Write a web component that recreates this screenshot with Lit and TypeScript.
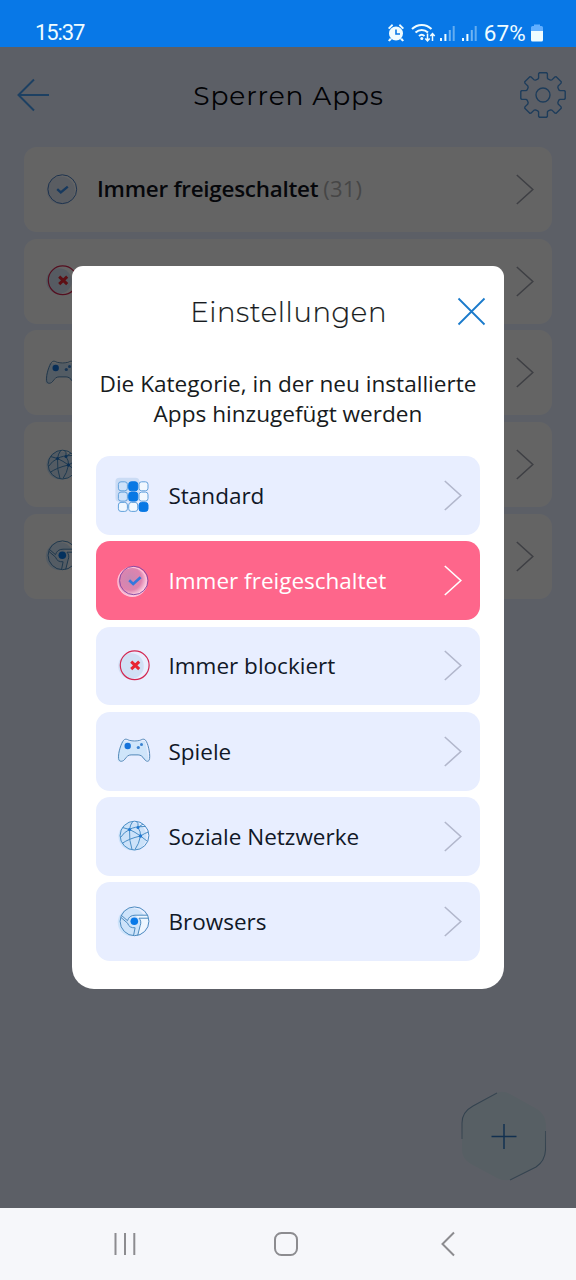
import { LitElement, html, svg, css } from "lit";
import { customElement, property } from "lit/decorators.js";

type IconName = "grid" | "check" | "checkActive" | "block" | "game" | "globe" | "browser";

const gearPath = (): string => {
  const tooth = [[-5.2, -15.8], [-4.4, -17], [-4.4, -21.2], [-3.6, -22.2], [3.6, -22.2], [4.4, -21.2], [4.4, -17], [5.2, -15.8]];
  const points: string[] = [];
  for (let i = 0; i < 8; i++) {
    const a = (i * Math.PI) / 4;
    for (const [x, y] of tooth) {
      points.push(`${(x * Math.cos(a) - y * Math.sin(a)).toFixed(2)} ${(x * Math.sin(a) + y * Math.cos(a)).toFixed(2)}`);
    }
  }
  return `M${points.join("L")}Z`;
};

const gridCells = [0, 1, 2].flatMap((r) => [0, 1, 2].map((c) => ({ r, c, on: (c === 1 && r < 2) || (c === 2 && r === 2) })));

const icons: Record<IconName, unknown> = {
  grid: svg`
    <rect x="0.4" y="0.8" width="24" height="24" rx="4" fill="#cbdcf5"/>
    ${gridCells.map(({ r, c, on }) => svg`<rect x=${3.4 + c * 10.3} y=${4.8 + r * 10.3} width="9" height="9" rx="2.6"
      fill=${on ? "#0878e4" : c === 0 && r < 2 ? "#cfe2fa" : "#f1f8ff"} stroke=${on ? "#0878e4" : "#63a2dc"} stroke-width="1"/>`)}`,
  check: svg`
    <circle cx="17.8" cy="18.4" r="14" fill="#cfdcf2" opacity=".6"/>
    <circle cx="19.3" cy="17.2" r="14.4" fill="none" stroke="#4a7fc4" stroke-width="1"/>
    <path d="M14.2 17.2l3.6 3.2 7-5.8" fill="none" stroke="#3a8eea" stroke-width="2.4"/>`,
  checkActive: svg`
    <defs><radialGradient id="glow" cx=".42" cy=".4" r=".6"><stop offset="0" stop-color="#c888b4"/><stop offset=".65" stop-color="#df84ae"/><stop offset="1" stop-color="#ffd5e6"/></radialGradient></defs>
    <circle cx="17.4" cy="18.8" r="14.5" fill="url(#glow)" stroke="#ffc4da" stroke-width="1.2"/>
    <circle cx="18.8" cy="17.5" r="14.2" fill="none" stroke="#8a4da5" stroke-width="1"/>
    <path d="M14.2 17.3l4 3.7 7.4-6.7" fill="none" stroke="#3478dd" stroke-width="2.6"/>`,
  block: svg`
    <circle cx="16" cy="18" r="12.8" fill="#c9dbf2" opacity=".75"/>
    <circle cx="19.7" cy="17.3" r="14.4" fill="none" stroke="#d32650" stroke-width="1.2"/>
    <path d="M16.2 13.6l8 7.6m0-7.600l-8 7.600" fill="none" stroke="#e82632" stroke-width="3"/>`,
  game: svg`
    <path d="M7 8C5 13 2 22 2.800 28c3 3 7-3 10-6h12c3 3 6 7 9 5L30 8c-7 1-16 1-23 0z" fill="#cfe5fa"/>
    <path d="M8.600 6.800c2.200-2.300 4.100-.4 5.900.1 3.200.8 7 .8 10.200 0 1.800-.5 3.700-2.400 5.900-.1 2.200 2.600 4.700 12.400 4 18.200-.5 4-3.500 3.200-5.300.6-1.800-2.700-3.500-4.200-6.200-4.200h-7c-2.700 0-4.400 1.500-6.200 4.200-1.800 2.600-5.800 3.400-6.300-.6-.7-5.800 2.800-15.600 5-18.200z" transform="translate(0 .5)" fill="none" stroke="#5288b8" stroke-width="1"/>
    <circle cx="12.700" cy="13" r="3.200" fill="#1673da"/><circle cx="23.300" cy="14.500" r="1.600" fill="#3a82d0"/><circle cx="26.500" cy="11.500" r="1.500" fill="#3a82d0"/>`,
  globe: svg`
    <circle cx="17.500" cy="18.500" r="14" fill="#c4dff8" opacity=".8"/>
    <g fill="none" stroke="#4a8ec6" stroke-width="1"><circle cx="19.500" cy="17.600" r="14.400"/>
    <path d="M7.500 9.500L14.500 11.500Q19 8.500 30 8.500M18 3Q15 7 14.500 11.500Q14 23 17 31.500M21 3Q24 5 23 9.500Q26 14 25.500 18Q24 26 20 31.500M14.500 11.500Q9 14 5.500 19.500M14.500 11.500Q20 14 25.500 18L32 23M7 25.500Q14 20.500 25.500 18Q30 15 33.500 14M23 9.500L28 6"/></g>
    <g fill="#2078d2"><circle cx="14.500" cy="11.500" r="1.600"/><circle cx="23" cy="9.500" r="1.500"/><circle cx="25.500" cy="18" r="1.700"/></g>`,
  browser: svg`
    <circle cx="16.800" cy="18.300" r="14" fill="#c4dff8" opacity=".75"/>
    <path d="M20 11h13l1 7-5 9-6 4 3-14z" fill="#eef6ff"/>
    <g fill="none" stroke="#4c8abf" stroke-width="1"><circle cx="19.500" cy="17.300" r="14.400"/>
    <path d="M33 11.200H20c-4 0-6.500 2-7.500 5.500L6 11M33.500 14.200H24c2 2 2.300 5 1.100 7.600L22.700 31.500M6 13.500l6.600 5.700c1 3.300 3.500 4.800 7.500 4.600L18.500 31.700"/></g>
    <circle cx="19.300" cy="17.300" r="3.800" fill="#0879e8"/>`,
};

@customElement("row-item")
class RowItem extends LitElement {
  @property() icon: IconName = "grid";
  @property() label = "";
  @property() count = "";

  static styles = css`
    :host { display: flex; align-items: center; box-sizing: border-box; }
    .icon { width: 36px; height: 36px; flex: none; overflow: visible; }
    .label { flex: 1; margin-left: var(--label-gap, 17.500px); padding-bottom: var(--label-lift, 0); white-space: nowrap;
      letter-spacing: var(--label-spacing, 0); color: var(--label-color, #111827); }
    .count { font-weight: 400; font-size: 22px; color: #b0b0b0; letter-spacing: .2px; margin-left: -.5px; }
    .chevron { width: 18px; height: 31px; flex: none; }
  `;

  render() {
    return html`
      <svg class="icon" viewBox="0 0 36 36">${icons[this.icon]}</svg>
      <span class="label">${this.label}${this.count ? html` <span class="count">${this.count}</span>` : ""}</span>
      <svg class="chevron" viewBox="0 0 18 31"><path d="M.8 1l16 14.500-16 14.500" fill="none" stroke="currentColor" stroke-width="1.600"/></svg>`;
  }
}

@customElement("app-root")
class AppRoot extends LitElement {
  static styles = css`
    :host { display: flex; flex-direction: column; position: relative; height: 1280px; width: 576px; overflow: hidden;
      font-family: "Open Sans", "Noto Sans", sans-serif; background: #e7eeff; }
    svg { display: block; flex: none; overflow: visible; }
    .status { height: 47px; box-sizing: border-box; background: #0878e7; color: #effcff; display: flex; align-items: center;
      padding: 19px 33px 0 35px; font: 400 22px/28px Roboto, sans-serif; }
    .time { flex: 1; letter-spacing: -1.100px; }
    .indicators { width: 92px; height: 20px; }
    .battery-text { letter-spacing: .2px; margin-left: 5px; font-size: 22.500px; }
    .battery { margin-left: 5px; }
    .screen { flex: 1; position: relative; display: flex; flex-direction: column; }
    .header { height: 100px; box-sizing: border-box; padding: 0 10px 4px 17px; display: flex; align-items: center; justify-content: space-between; }
    .title { font: 400 26.500px/32px Montserrat, Inter, sans-serif; color: #05070d; letter-spacing: .9px; padding: 2px 0 0 8px; }
    .list { display: flex; flex-direction: column; gap: 6.700px; padding: 0 24px; }
    .card { height: 85px; border-radius: 13px; background: #fbfbfb; padding: 0 18px 0 19px; color: #9c9faa;
      --label-gap: 18px; font-size: 22.400px; }
    .card.first { font-weight: 600; --label-spacing: -.25px; --label-color: #10131c; --label-lift: 3px; }
    .fab { margin: auto 29px 27px auto; }
    .dim { position: absolute; inset: 0; background: rgba(0, 0, 0, .6); }
    .modal { position: absolute; left: 72px; top: 219px; width: 432px; height: 723px; box-sizing: border-box; padding: 0 24px;
      background: #fff; border-radius: 11px 11px 22px 22px; display: flex; flex-direction: column; color: #171b20; }
    .modal-head { height: 90px; display: flex; align-items: center; justify-content: flex-end; gap: 71px; margin-right: -5px; }
    .modal-title { font: 300 27.500px/32px Montserrat, Inter, sans-serif; letter-spacing: .6px; padding-top: 1px; -webkit-text-stroke: .2px currentColor; }
    .desc { font-size: 22.600px; line-height: 30px; text-align: center; white-space: pre-line; margin: 13px -12px 27px; }
    .options { display: flex; flex-direction: column; gap: 6.600px; }
    .option { height: 78.700px; border-radius: 14px; background: #e8eeff; padding: 0 18px 0 19px; font-size: 22.500px; color: #b2b7cc; }
    .option.selected { background: #fe668b; color: #fff; --label-color: #fff; }
    .nav { height: 72px; background: #f6f7fa; display: grid; grid-template-columns: 160px 167px 14px;
      align-items: center; padding-left: 114px; box-sizing: border-box; }
  `;

  render() {
    const apps: [IconName, string, string][] = [["check", "Immer freigeschaltet", "(31)"], ["block", "", ""], ["game", "", ""], ["globe", "", ""], ["browser", "", ""]];
    const options: [IconName, string][] = [["grid", "Standard"], ["checkActive", "Immer freigeschaltet"], ["block", "Immer blockiert"], ["game", "Spiele"], ["globe", "Soziale Netzwerke"], ["browser", "Browsers"]];
    return html`
      <div class="status">
        <span class="time">15:37</span>
        <svg class="indicators" viewBox="0 0 92 20">
          <g fill="#effcff"><circle cx="9" cy="10.500" r="7"/><path d="M1 5l4-4 1.200 1.400L2.300 6.200zM17 5l-4-4-1.200 1.400 3.900 3.800zM3 15l-2 2.500 1.500 1 2.300-2zM15 15l2 2.500-1.500 1-2.300-2z"/></g>
          <path d="M9 6.500v4.500h4" fill="none" stroke="#0878e7" stroke-width="1.600"/>
          <g fill="none" stroke="#effcff" stroke-width="2"><path d="M25 6c5.500-5.500 14-5.500 19.500 0M28.500 9.500c3.700-3.500 8.800-3.500 12.500 0M32 13c1.700-1.600 3.800-1.600 5.500 0"/></g>
          <circle cx="34.800" cy="15.600" r="1.500" fill="#effcff"/>
          <path d="M40.500 10.500v7M38.300 15.500l2.200 2.300 2.200-2.300M45.500 18v-7M43.300 13l2.200-2.300 2.200 2.300" fill="none" stroke="#effcff" stroke-width="1.500"/>
          ${[53, 75].map((x) => svg`<g fill="#effcff"><rect x=${x} y="15" width="2" height="3"/><rect x=${x + 4.4} y="11" width="2" height="7"/><rect x=${x + 8.8} y="7" width="2" height="11" opacity=".45"/><rect x=${x + 12.7} y="3" width="2" height="15" opacity=".4"/></g>`)}
        </svg>
        <span class="battery-text">67%</span>
        <svg class="battery" width="12" height="18" viewBox="0 0 12 18"><path d="M3 2V.5h6V2h1.500Q12 2 12 3.500V7H0V3.500Q0 2 1.500 2z" fill="#62afff"/><path d="M0 7h12v9q0 1.500-1.500 1.500h-9Q0 17.500 0 16z" fill="#effcff"/></svg>
      </div>
      <div class="screen">
        <div class="header">
          <svg width="32" height="34" viewBox="0 0 32 34" fill="none" stroke="#4aa0f4" stroke-width="2"><path d="M17 1.500L1.500 17 17 32.500M1.500 17H32"/></svg>
          <span class="title">Sperren Apps</span>
          <svg width="46" height="46" viewBox="-23 -23 46 46" fill="none" stroke="#4a96e2" stroke-width="1.400" stroke-linejoin="round"><path d=${gearPath()}/><circle r="7"/></svg>
        </div>
        <div class="list">
          ${apps.map(([icon, label, count], i) => html`<row-item class="card ${i === 0 ? "first" : ""}" .icon=${icon} .label=${label} .count=${count}></row-item>`)}
        </div>
        <svg class="fab" width="86" height="90" viewBox="0 0 86 90">
          <defs><linearGradient id="rim" x1="0" y1="0" x2="1" y2="1"><stop offset="0" stop-color="#6b93b8"/><stop offset=".5" stop-color="#b7d0e4"/><stop offset="1" stop-color="#6b93b8"/></linearGradient></defs>
          <path d="M35 2Q42-1 49 3L76 18Q85 24 85 34v26Q84 70 76 76L51 88Q44 91 36 87L10 73Q1 68 1 59V31Q2 20 11 15z" fill="#d9edf9"/>
          <path d="M36 2L12 15Q1 21 1 32V48M84.500 40V59Q84 70 75 76L49 89" fill="none" stroke="url(#rim)" stroke-width="1.100"/>
          <path d="M43 33v25M30.500 45.500h25" stroke="#2d79c8" stroke-width="1.500"/>
        </svg>
        <div class="dim"></div>
        <div class="modal">
          <div class="modal-head">
            <span class="modal-title">Einstellungen</span>
            <svg width="27" height="27" viewBox="0 0 27 27" fill="none" stroke="#1a7acb" stroke-width="1.800"><path d="M.5.5l26 26m0-26l-26 26"/></svg>
          </div>
          <div class="desc">Die Kategorie, in der neu installierte
Apps hinzugefügt werden</div>
          <div class="options">
            ${options.map(([icon, label]) => html`<row-item class="option ${icon === "checkActive" ? "selected" : ""}" .icon=${icon} .label=${label}></row-item>`)}
          </div>
        </div>
      </div>
      <div class="nav">
        <svg width="22" height="24" viewBox="0 0 22 24" stroke="#8c8c8f" stroke-width="2"><path d="M1.500 1v22M11 1v22M20.300 1v22"/></svg>
        <svg width="24" height="24" viewBox="0 0 24 24"><rect x="1" y="1" width="22" height="22" rx="6.500" fill="none" stroke="#8c8c8f" stroke-width="2"/></svg>
        <svg width="14" height="24" viewBox="0 0 14 24" fill="none" stroke="#8c8c8f" stroke-width="2"><path d="M13 .5L1.500 12 13 23.500"/></svg>
      </div>`;
  }
}
